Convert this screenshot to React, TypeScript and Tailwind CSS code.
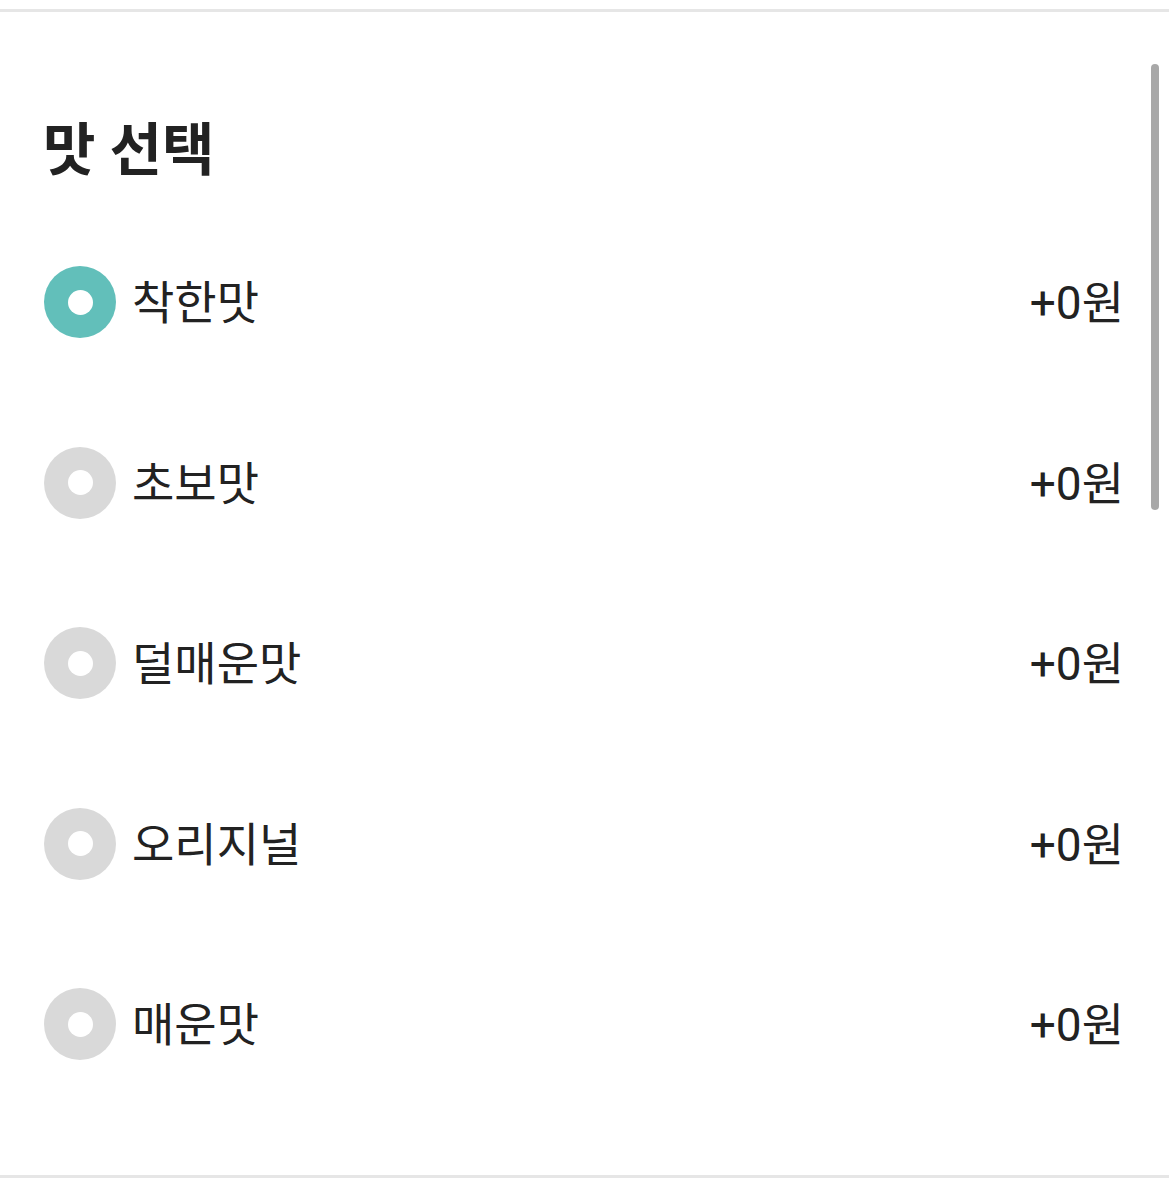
import React from "react";

const options = ["착한맛", "초보맛", "덜매운맛", "오리지널", "매운맛"];

export default function App() {
  const font = { fontFamily: 'Roboto, "Noto Sans CJK KR", "Noto Sans", sans-serif' };
  return (
    <div className="relative w-[1169px] h-[1186px] bg-white pt-[9px]" style={font}>
      <div className="border-t-[3px] border-b-[3px] border-[#e6e6e6] h-[1169px] flex flex-col">
        <div className="pl-[43px] pt-[98px] pb-[21px]">
          <h1 className="text-[57px] leading-[81px] font-bold text-[#222222]">맛 선택</h1>
        </div>
        {options.map((o, i) => (
          <div key={o} className="flex items-center h-[180.5px] pl-[44px] pr-[45px]">
            <div
              className={
                "w-[72px] h-[72px] rounded-full flex items-center justify-center " +
                (i === 0 ? "bg-[#62bfba]" : "bg-[#d9d9d9]")
              }
            >
              <div className="w-[25px] h-[25px] rounded-full bg-white" />
            </div>
            <span className="ml-[16px] pt-[2px] text-[46px] leading-none text-[#222222]">{o}</span>
            <span className="ml-auto pt-[2px] text-[46px] leading-none text-[#222222]">+0원</span>
          </div>
        ))}
      </div>
      <div className="absolute left-[1151px] top-[64px] w-[8px] h-[446px] rounded-full bg-[#a8a8a8]" />
    </div>
  );
}
